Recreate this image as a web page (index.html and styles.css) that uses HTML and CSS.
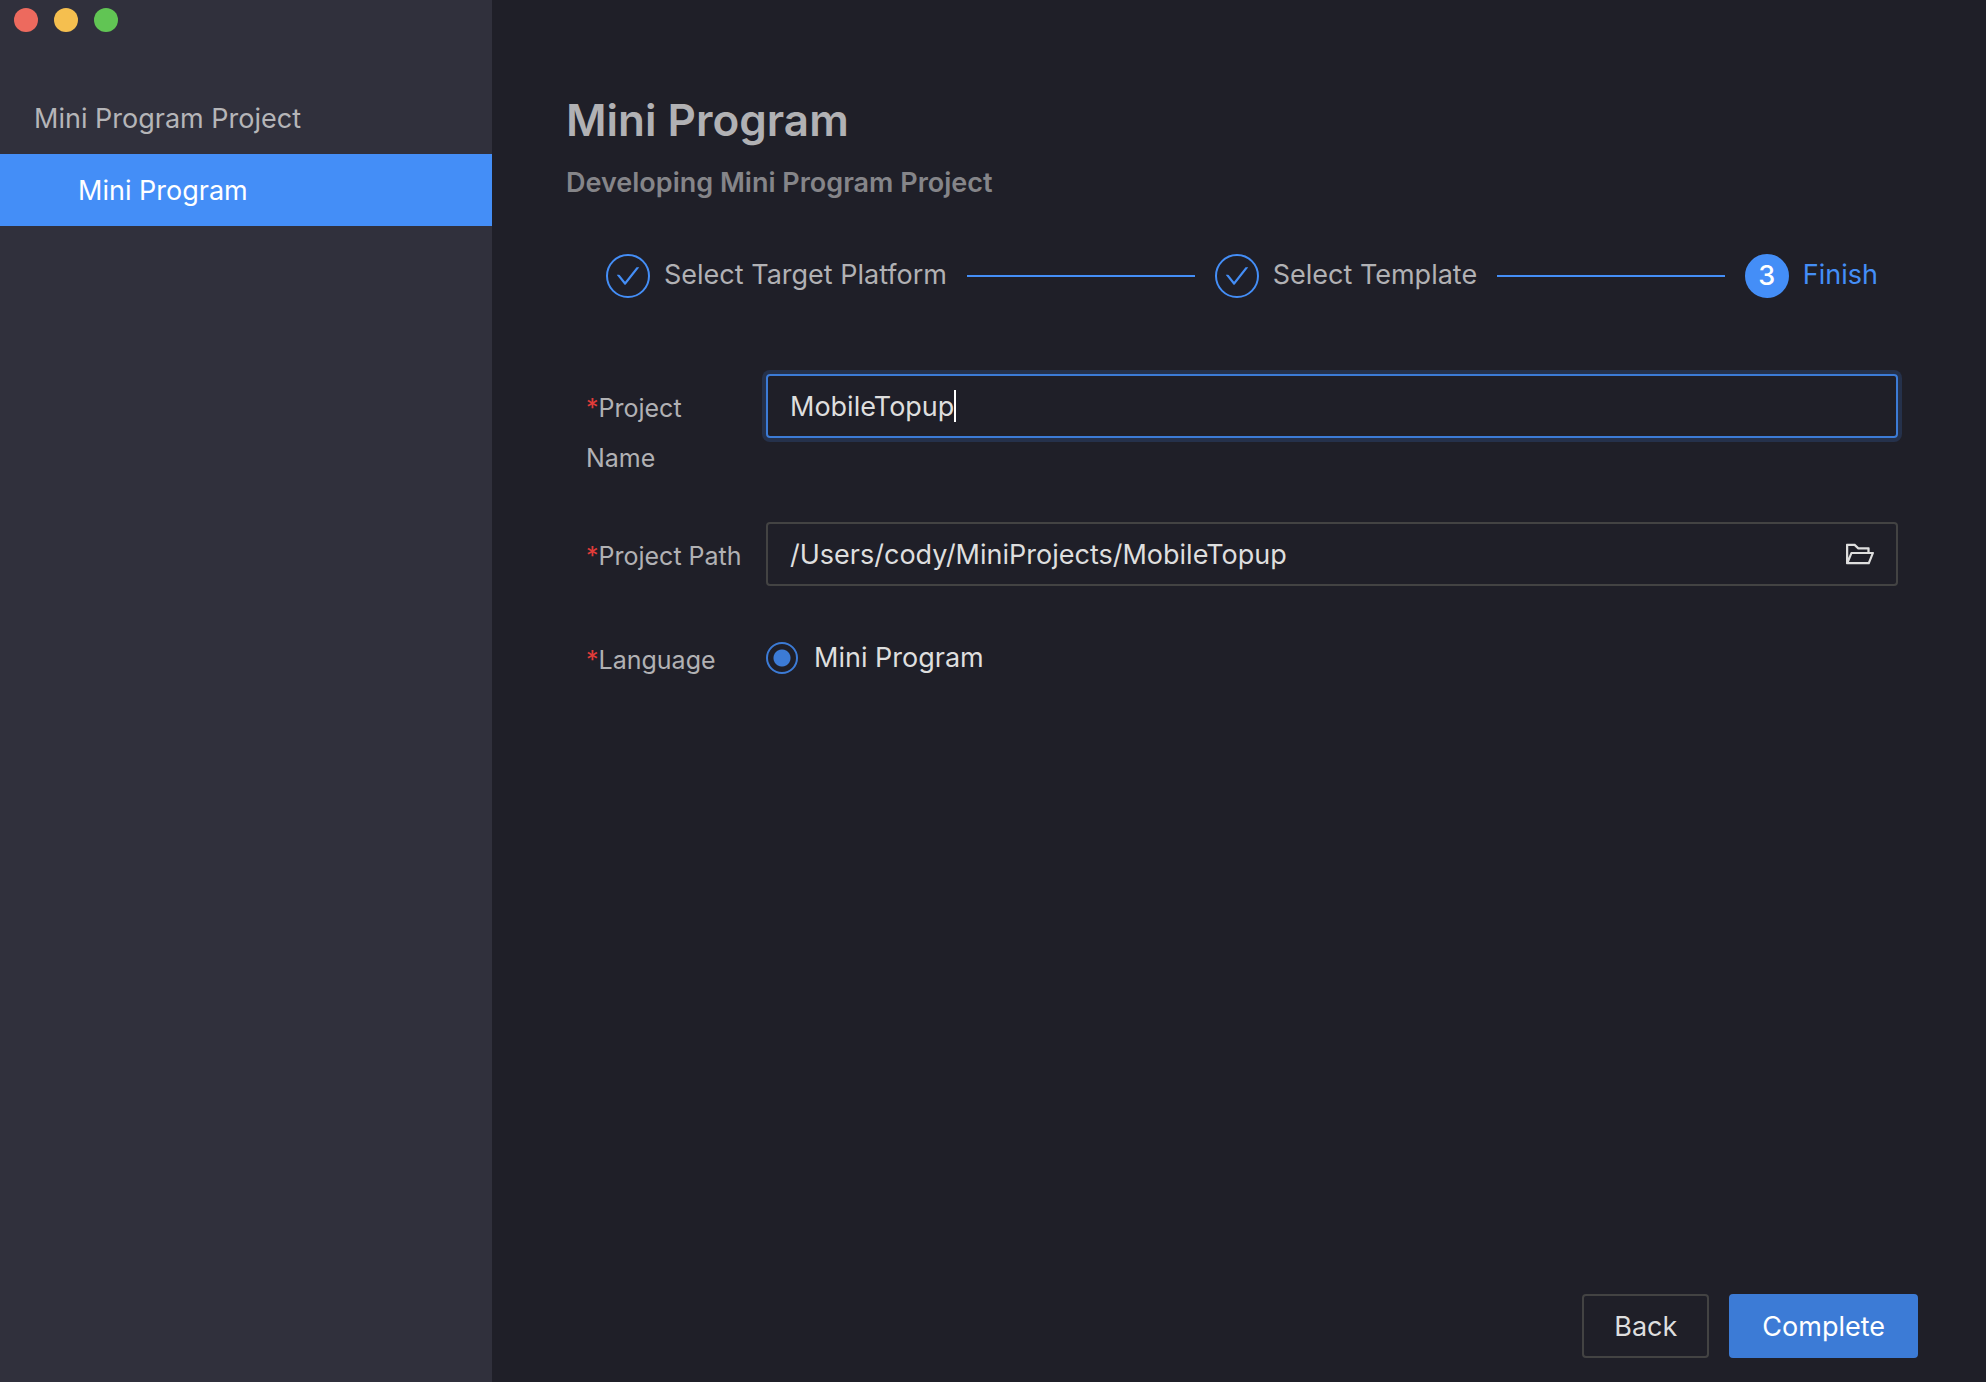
FILE: index.html
```html
<!DOCTYPE html>
<html lang="en">
<head>
<meta charset="utf-8">
<title>Mini Program Project</title>
<link rel="stylesheet" href="styles.css">
</head>
<body>
<div class="window">
  <aside class="sidebar">
    <div class="traffic">
      <button class="dot dot-close" type="button" aria-label="Close"></button>
      <button class="dot dot-min" type="button" aria-label="Minimize"></button>
      <button class="dot dot-max" type="button" aria-label="Zoom"></button>
    </div>
    <nav class="menu">
      <div class="menu-group">Mini Program Project</div>
      <a class="menu-item" href="#mini-program">Mini Program</a>
    </nav>
  </aside>
  <main class="main">
    <h1 class="title">Mini Program</h1>
    <h2 class="subtitle">Developing Mini Program Project</h2>
    <ol class="steps">
      <li class="step">
        <span class="step-icon"><svg class="check" viewBox="0 0 1024 1024" aria-hidden="true"><path d="M912 190h-69.900c-9.800 0-19.100 4.500-25.100 12.200L404.700 724.500 207 474a32 32 0 0 0-25.100-12.200H112c-6.700 0-10.400 7.700-6.300 12.900l273.900 347c12.800 16.200 37.400 16.200 50.300 0l488.400-618.900c4.100-5.100.4-12.800-6.300-12.800z"/></svg></span>
        <span class="step-text">Select Target Platform</span>
      </li>
      <li class="step">
        <span class="step-icon"><svg class="check" viewBox="0 0 1024 1024" aria-hidden="true"><path d="M912 190h-69.900c-9.800 0-19.100 4.500-25.100 12.200L404.700 724.500 207 474a32 32 0 0 0-25.100-12.200H112c-6.700 0-10.400 7.700-6.300 12.900l273.900 347c12.800 16.200 37.400 16.200 50.300 0l488.400-618.900c4.100-5.100.4-12.800-6.300-12.800z"/></svg></span>
        <span class="step-text">Select Template</span>
      </li>
      <li class="step step-current">
        <span class="step-icon">3</span>
        <span class="step-text">Finish</span>
      </li>
    </ol>
    <form class="form" id="project">
      <div class="row">
        <label class="label" for="name">Project Name</label>
        <div class="field field-focus">
          <input class="input input-fit" id="name" type="text" value="MobileTopup" required>
          <span class="caret"></span>
        </div>
      </div>
      <div class="row">
        <label class="label" for="path">Project Path</label>
        <div class="field">
          <input class="input" id="path" type="text" value="/Users/cody/MiniProjects/MobileTopup" required>
          <button class="browse" type="button" aria-label="Choose folder">
            <svg class="folder" viewBox="0 0 1024 1024" aria-hidden="true"><path d="M928 444H820V330.400c0-17.700-14.300-32-32-32H473L355.700 186.200a8.150 8.150 0 0 0-5.500-2.200H96c-17.700 0-32 14.300-32 32v592c0 17.700 14.300 32 32 32h698c13 0 24.800-7.900 29.700-20l134-332c1.500-3.800 2.300-7.900 2.300-12 0-17.700-14.300-32-32-32zM136 256h188.500l119.600 114.400H748V444H238c-13 0-24.800 7.900-29.700 20L136 643.200V256zm635.300 512H159l103.300-256h612.400L771.300 768z"/></svg>
          </button>
        </div>
      </div>
      <div class="row" role="radiogroup" aria-labelledby="language">
        <div class="label" id="language">Language</div>
        <label class="choice"><input class="radio" type="radio" name="language" checked>Mini Program</label>
      </div>
    </form>
    <footer class="actions">
      <button class="btn" type="button">Back</button>
      <button class="btn btn-primary" type="submit" form="project">Complete</button>
    </footer>
  </main>
</div>
</body>
</html>
```
FILE: styles.css
```css
* { box-sizing: border-box; }
body {
  margin: 0;
  background: #1f1f28;
  color: #dedede;
  font: 27px/44px Inter, "Liberation Sans", sans-serif;
}
button, input { font: inherit; color: inherit; }
.window { display: flex; min-height: 100vh; }

.sidebar { flex: none; width: 492px; background: #30303c; }
.traffic { display: flex; gap: 16px; padding: 8px 14px; }
.dot { width: 24px; height: 24px; padding: 0; border: 0; border-radius: 50%; }
.dot-close { background: #ed6a5e; }
.dot-min { background: #f5bf4f; }
.dot-max { background: #61c554; }
.menu { padding-top: 42px; }
.menu-group, .menu-item { display: block; padding-top: 2px; line-height: 70px; }
.menu-group { padding-left: 34px; color: #b5b5b8; }
.menu-item { padding-left: 78px; background: #448ef7; color: #fff; text-decoration: none; }

.main { flex: 1; display: flex; flex-direction: column; padding: 88px 68px 24px 74px; color: #b1b1b4; }
.title { margin: 0; font-size: 44px; line-height: 64px; font-weight: 600; }
.subtitle { margin: 8px 0 0; font-size: 27px; line-height: 46px; font-weight: 600; color: #858589; }

.steps { display: flex; gap: 20px; margin: 48px 40px 76px; padding: 0; list-style: none; }
.step { display: flex; align-items: center; flex: 1 0 auto; }
.step:last-child { flex: none; }
.step:not(:last-child)::after { content: ""; flex: 1; height: 2px; margin-left: 20px; background: #448ef7; }
.step-text { padding-bottom: 2px; line-height: 42px; }
.step-icon {
  display: flex; align-items: center; justify-content: center;
  width: 44px; height: 44px; margin-right: 14px;
  border: 2px solid #448ef7; border-radius: 50%;
}
.check { flex: none; width: 28px; height: 28px; fill: #448ef7; }
.step-current { color: #448ef7; }
.step-current .step-icon { background: #448ef7; color: #fff; font-weight: 500; }

.form { display: flex; flex-direction: column; gap: 40px; padding: 0 20px; }
.row { display: flex; align-items: flex-start; }
.label { flex: none; width: 180px; padding: 9px 16px 0 0; font-size: 25px; line-height: 50px; }
.row:first-child .label { margin-bottom: -1px; }
.label::before { content: "*"; color: #e23c39; }
.field {
  flex: 1; display: flex; align-items: center; height: 64px; padding: 0 20px 0 22px;
  border: 2px solid #434343; border-radius: 4px; color: #dedede;
}
.field-focus { border-color: #3c7bd6; box-shadow: 0 0 0 4px #25314b; }
.input { flex: 1; min-width: 0; padding: 2px 0 0; border: 0; outline: 0; background: none; }
.input-fit { flex: none; field-sizing: content; }
.caret { width: 2px; height: 32px; background: #fff; }
.browse { display: flex; padding: 0; border: 0; background: none; }
.folder { width: 32px; height: 32px; fill: currentColor; }
.choice { display: flex; align-items: center; gap: 16px; height: 64px; color: #dedede; }
.radio {
  appearance: none; width: 32px; height: 32px; margin: 0;
  border: 2px solid #3c7bd6; border-radius: 50%;
  background: radial-gradient(circle, #3c7bd6 8px, transparent 9px);
}

.actions { display: flex; justify-content: flex-end; gap: 20px; margin-top: auto; }
.btn {
  height: 64px; padding: 2px 30px 0; border: 2px solid #434343; border-radius: 4px;
  background: none; color: #dedede;
}
.btn-primary { padding: 2px 31px 0; border-color: #3c7bd6; background: #3c7bd6; color: #fff; }
```
